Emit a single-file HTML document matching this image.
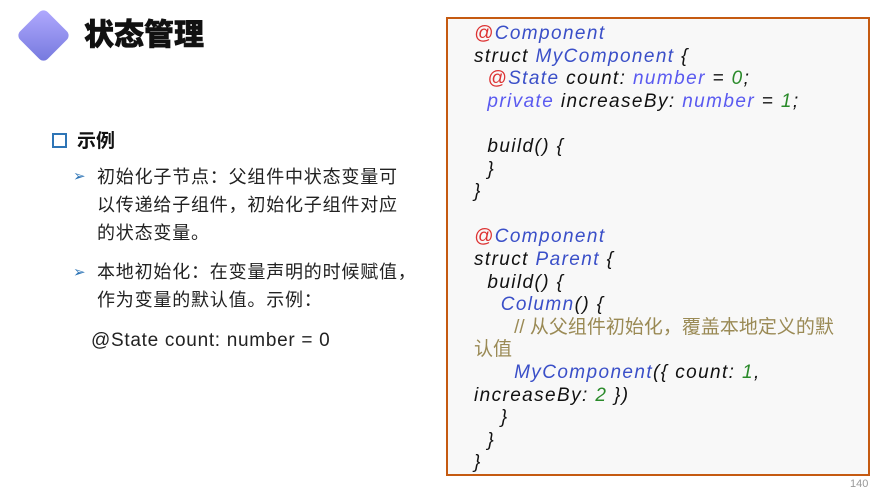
<!DOCTYPE html>
<html><head><meta charset="utf-8"><style>
body{margin:0;width:882px;height:487px;background:#fff;position:relative;overflow:hidden;font-family:"Liberation Sans","Noto Sans CJK SC",sans-serif;}
.a{position:absolute;white-space:nowrap;}
.dia{position:absolute;left:24px;top:16px;width:39px;height:39px;transform:rotate(45deg);border-radius:6px;background:linear-gradient(-45deg,#7478dd,#b2aaff);}
.title{left:84px;top:17px;font-size:30px;font-weight:900;color:#111;line-height:38px;-webkit-text-stroke:0.6px #111;}
.sq{position:absolute;left:52px;top:133px;width:11px;height:11px;border:2.5px solid #2e75b6;}
.h{left:77px;top:129px;font-size:19px;font-weight:bold;color:#111;line-height:26px;}
.t{font-size:18px;color:#222;line-height:28px;letter-spacing:0.8px;}
.arr{position:absolute;font-size:15px;color:#2e75b6;}
.box{position:absolute;left:446px;top:17px;width:420px;height:455px;border:2px solid #c55a11;background:#f8f8f8;}
.code{position:absolute;left:474px;top:23px;font-family:"Liberation Sans","Noto Sans CJK SC",sans-serif;font-style:italic;font-size:19px;line-height:22.6px;color:#111;white-space:pre;letter-spacing:1.4px;}
.r{color:#d33}.b{color:#3a4fc8}.p{color:#5a5af0}.g{color:#2a8a2a}.c{color:#9a8a55;font-style:normal;font-size:19px;letter-spacing:0}
</style></head><body>
<div class="dia"></div>
<div class="a title">状态管理</div>
<div class="sq"></div>
<div class="a h">示例</div>
<div class="arr" style="left:73px;top:167px">➢</div>
<div class="a t" style="left:97px;top:163px">初始化子节点：父组件中状态变量可<br>以传递给子组件，初始化子组件对应<br>的状态变量。</div>
<div class="arr" style="left:73px;top:263px">➢</div>
<div class="a t" style="left:97px;top:258px">本地初始化：在变量声明的时候赋值，<br>作为变量的默认值。示例：</div>
<div class="a t" style="left:91px;top:327px;font-size:19px;letter-spacing:0.7px">@State count: number = 0</div>
<div class="box"></div>
<div class="code"><span class="r">@</span><span class="b">Component</span>
struct <span class="b">MyComponent</span> {
  <span class="r">@</span><span class="b">State</span> count: <span class="p">number</span> = <span class="g">0</span>;
  <span class="p">private</span> increaseBy: <span class="p">number</span> = <span class="g">1</span>;

  build() {
  }
}

<span class="r">@</span><span class="b">Component</span>
struct <span class="b">Parent</span> {
  build() {
    <span class="b">Column</span>() {
      <span class="c">// 从父组件初始化，覆盖本地定义的默</span>
<span class="c">认值</span>
      <span class="b">MyComponent</span>({ count: <span class="g">1</span>,
increaseBy: <span class="g">2</span> })
    }
  }
}</div>
<div class="a" style="left:850px;top:478px;font-size:11px;color:#999">140</div>
</body></html>
